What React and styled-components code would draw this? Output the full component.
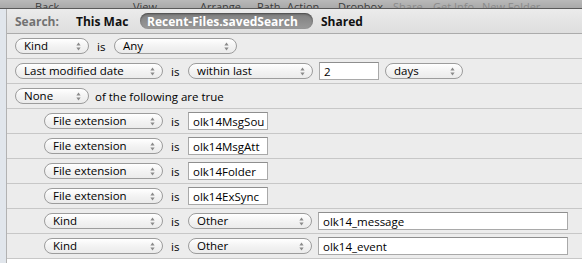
import React from "react";
import styled, { createGlobalStyle } from "styled-components";

const Global = createGlobalStyle`
  html, body { margin: 0; padding: 0; background: #ffffff; }
  body { font-family: "Open Sans", "Noto Sans", sans-serif; font-size: 11.5px; color: #000; }
  * { box-sizing: border-box; }
`;

const Window = styled.div`
  width: 582px;
  height: 263px;
  display: flex;
  flex-direction: column;
  overflow: hidden;
  background: #ffffff;
`;

const Toolbar = styled.div`
  height: 9px;
  flex: none;
  display: flex;
  align-items: flex-end;
  padding-left: 35px;
  overflow: hidden;
  background: linear-gradient(#b9b9b9, #a9a9a9);
  border-bottom: 1px solid #5a5a5a;
`;

const ToolLabel = styled.span`
  flex: none;
  width: ${(p) => p.$w}px;
  font-size: 11px;
  line-height: 12px;
  margin-bottom: -5px;
  white-space: nowrap;
  color: ${(p) => (p.$off ? "#8a8a8a" : "#3c3c3c")};
`;

const Body = styled.div`
  flex: 1;
  display: flex;
  min-height: 0;
`;

const Sidebar = styled.div`
  width: 7px;
  flex: none;
  background: #e1e6ec;
  border-right: 1px solid #b2b2b2;
`;

const Main = styled.div`
  flex: 1;
  display: flex;
  flex-direction: column;
  background: #ffffff;
`;

const SearchBar = styled.div`
  height: 25px;
  flex: none;
  display: flex;
  align-items: center;
  padding-left: 8px;
  background: linear-gradient(#ebebeb, #dedede);
  border-bottom: 1px solid #ababab;
  font-weight: 700;
  font-size: 12px;
`;

const ScopeLabel = styled.span`
  flex: none;
  width: ${(p) => (p.$w ? `${p.$w}px` : "auto")};
  margin-left: ${(p) => p.$ml || 0}px;
  color: ${(p) => (p.$muted ? "#727272" : "#111")};
  white-space: nowrap;
`;

const ScopePill = styled.span`
  flex: none;
  height: 16px;
  width: 173px;
  display: flex;
  align-items: center;
  padding-left: 7px;
  border-radius: 8px;
  background: linear-gradient(#7f7f7f, #9a9a9a);
  box-shadow: inset 0 1px 2px rgba(0, 0, 0, 0.45);
  color: #ffffff;
  white-space: nowrap;
`;

const Row = styled.div`
  height: 25px;
  flex: none;
  display: flex;
  align-items: center;
  gap: 6px;
  padding-left: ${(p) => (p.$nested ? 37 : 8)}px;
  background: #ececec;
  border-bottom: 1px solid #c7c7c7;
`;

const Popup = styled.div`
  width: ${(p) => p.$w}px;
  height: 16px;
  flex: none;
  display: flex;
  align-items: center;
  justify-content: space-between;
  padding: 0 7px 0 8px;
  border: 1px solid #9c9c9c;
  border-radius: 8px;
  background: linear-gradient(#ffffff, #f2f2f2 55%, #ebebeb);
  white-space: nowrap;
  line-height: 14px;
`;

const Label = styled.span`
  flex: none;
  white-space: nowrap;
  width: ${(p) => (p.$w ? `${p.$w}px` : "auto")};
  padding-left: ${(p) => p.$pl || 0}px;
`;

const Field = styled.div`
  width: ${(p) => p.$w}px;
  height: 18px;
  flex: none;
  display: flex;
  align-items: center;
  padding-left: 4px;
  background: #ffffff;
  border: 1px solid #a9a9a9;
  border-top-color: #8e8e8e;
  white-space: nowrap;
  overflow: hidden;
`;

const Arrows = () => (
  <svg width="5" height="9" viewBox="0 0 5 9">
    <path d="M2.5 0.5 L4.6 3.4 L0.4 3.4 Z" fill="#8a8a8a" />
    <path d="M2.5 8.5 L4.6 5.6 L0.4 5.6 Z" fill="#8a8a8a" />
  </svg>
);

const Pop = ({ w, children }) => (
  <Popup $w={w}>
    <span>{children}</span>
    <Arrows />
  </Popup>
);

const Is = () => (
  <Label $w={13} $pl={2}>
    is
  </Label>
);

export default function App() {
  return (
    <>
      <Global />
      <Window>
        <Toolbar>
          <ToolLabel $w={98}>Back</ToolLabel>
          <ToolLabel $w={67}>View</ToolLabel>
          <ToolLabel $w={57}>Arrange</ToolLabel>
          <ToolLabel $w={30}>Path</ToolLabel>
          <ToolLabel $w={51}>Action</ToolLabel>
          <ToolLabel $w={55}>Dropbox</ToolLabel>
          <ToolLabel $w={40} $off>Share</ToolLabel>
          <ToolLabel $w={49} $off>Get Info</ToolLabel>
          <ToolLabel $w={80} $off>New Folder</ToolLabel>
        </Toolbar>
        <Body>
          <Sidebar />
          <Main>
            <SearchBar>
              <ScopeLabel $w={61} $muted>Search:</ScopeLabel>
              <ScopeLabel $w={64}>This Mac</ScopeLabel>
              <ScopePill>Recent-Files.savedSearch</ScopePill>
              <ScopeLabel $ml={8}>Shared</ScopeLabel>
            </SearchBar>
            <Row>
              <Pop w={74}>Kind</Pop>
              <Is />
              <Pop w={123}>Any</Pop>
            </Row>
            <Row>
              <Pop w={148}>Last modified date</Pop>
              <Is />
              <Pop w={125}>within last</Pop>
              <Field $w={60}>2</Field>
              <Pop w={78}>days</Pop>
            </Row>
            <Row>
              <Pop w={74}>None</Pop>
              <Label>of the following are true</Label>
            </Row>
            {["olk14MsgSou", "olk14MsgAtt", "olk14Folder", "olk14ExSync"].map((v) => (
              <Row $nested key={v}>
                <Pop w={119}>File extension</Pop>
                <Is />
                <Field $w={80}>{v}</Field>
              </Row>
            ))}
            {["olk14_message", "olk14_event"].map((v) => (
              <Row $nested key={v}>
                <Pop w={119}>Kind</Pop>
                <Is />
                <Pop w={124}>Other</Pop>
                <Field $w={250}>{v}</Field>
              </Row>
            ))}
          </Main>
        </Body>
      </Window>
    </>
  );
}
